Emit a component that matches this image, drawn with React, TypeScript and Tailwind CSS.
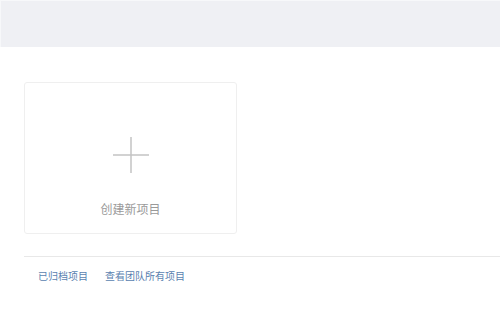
export default function App() {
  return (
    <div
      className="h-[332px] w-[500px] overflow-hidden bg-white"
      style={{ fontFamily: '"Liberation Sans", "Noto Sans CJK SC", sans-serif' }}
    >
      <header className="h-[47px] border-t border-l border-[#f7f8fa] bg-[#eff0f4]" />

      <main className="pl-6 pt-[35px]">
        <button className="flex h-[152px] w-[213px] flex-col items-center rounded-[3px] border border-[#efefef] bg-white">
          <svg
            className="mt-[54px]"
            width="36"
            height="36"
            viewBox="0 0 36 36"
            fill="none"
            stroke="#c4c4c4"
            strokeWidth="1.5"
          >
            <path d="M18 0v36M0 18h36" />
          </svg>
          <span className="mt-[31px] text-[12px] leading-none text-[#9a9a9a]">
            创建新项目
          </span>
        </button>

        <div className="mt-[22px] border-t border-[#e8e8e8]" />

        <nav className="flex gap-[17px] pl-[14px] pt-[15px] text-[10px] leading-none text-[#5a7fb0]">
          <a href="#">已归档项目</a>
          <a href="#">查看团队所有项目</a>
        </nav>
      </main>
    </div>
  );
}
